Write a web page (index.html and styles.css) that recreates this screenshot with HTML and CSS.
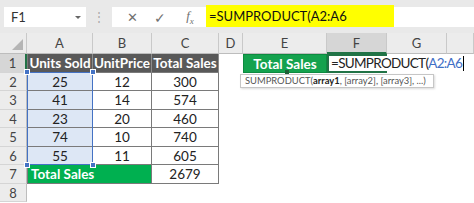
FILE: index.html
```html
<!DOCTYPE html>
<html lang="en">
<head>
  <meta charset="UTF-8">
  <title>SUMPRODUCT</title>
  <link rel="stylesheet" href="styles.css">
</head>
<body>

  <div class="topbar">
    <div class="namebox">
      <span>F1</span>
      <span class="caret"></span>
    </div>
    <div class="grip">&#8942;</div>
    <div class="fbar">
      <span class="fbtn">&#10005;</span>
      <span class="fbtn check">&#10003;</span>
      <span class="fbtn fx">f<sub>x</sub></span>
      <div class="formula">=SUMPRODUCT(A2:A6</div>
    </div>
  </div>

  <div class="sheet">
    <!-- column headers -->
    <div class="colhead corner"><span class="tri"></span></div>
    <div class="colhead">A</div>
    <div class="colhead">B</div>
    <div class="colhead">C</div>
    <div class="colhead">D</div>
    <div class="colhead">E</div>
    <div class="colhead active">F</div>
    <div class="colhead">G</div>
    <div class="colhead"></div>

    <!-- row 1 -->
    <div class="rowhead active">1</div>
    <div class="cell tbl first head">Units Sold</div>
    <div class="cell tbl head">UnitPrice</div>
    <div class="cell tbl head">Total Sales</div>
    <div class="cell"></div>
    <div class="cell green">Total Sales</div>
    <div class="cell current">=SUMPRODUCT(<span class="ref">A2:A6</span><span class="cursor"></span></div>
    <div class="cell"></div>
    <div class="cell"></div>

    <!-- rows 2-6 -->
    <div class="rowhead">2</div>
    <div class="cell tbl first sel">25</div>
    <div class="cell tbl">12</div>
    <div class="cell tbl">300</div>
    <div class="cell span5"></div>

    <div class="rowhead">3</div>
    <div class="cell tbl first sel">41</div>
    <div class="cell tbl">14</div>
    <div class="cell tbl">574</div>
    <div class="cell span5"></div>

    <div class="rowhead">4</div>
    <div class="cell tbl first sel">23</div>
    <div class="cell tbl">20</div>
    <div class="cell tbl">460</div>
    <div class="cell span5"></div>

    <div class="rowhead">5</div>
    <div class="cell tbl first sel">74</div>
    <div class="cell tbl">10</div>
    <div class="cell tbl">740</div>
    <div class="cell span5"></div>

    <div class="rowhead">6</div>
    <div class="cell tbl first sel">55</div>
    <div class="cell tbl">11</div>
    <div class="cell tbl">605</div>
    <div class="cell span5"></div>

    <!-- row 7 -->
    <div class="rowhead">7</div>
    <div class="cell tbl first total">Total Sales</div>
    <div class="cell tbl">2679</div>
    <div class="cell span5"></div>

    <!-- row 8 -->
    <div class="rowhead">8</div>
    <div class="cell span8"></div>

    <!-- overlays -->
    <div class="range">
      <span class="knob tl"></span>
      <span class="knob tr"></span>
      <span class="knob bl"></span>
      <span class="knob br"></span>
    </div>
    <div class="handle"></div>
    <div class="tip">SUMPRODUCT(<b>array1</b>, [array2], [array3], ...)</div>
  </div>

</body>
</html>
```

FILE: styles.css
```css
body {
  margin: 0;
  width: 474px;
  height: 203px;
  overflow: hidden;
  background-color: #fff;
  font-family: Lato, "Open Sans", sans-serif;
}

/* Formula bar */
.topbar {
  height: 33px;
  box-sizing: border-box;
  padding: 7px 0 0 4px;
  background-color: #e9e9e9;
  display: flex;
  align-items: flex-start;
}

.namebox {
  width: 82px;
  height: 20px;
  background-color: #fff;
  display: flex;
  align-items: center;
  justify-content: space-between;
  padding: 0 5px 0 7px;
  box-sizing: border-box;
  font-size: 13px;
  color: #333;
}

.caret {
  width: 0;
  height: 0;
  border-left: 3px solid transparent;
  border-right: 3px solid transparent;
  border-top: 3px solid #666;
}

.grip {
  width: 26px;
  height: 20px;
  text-align: center;
  line-height: 20px;
  font-size: 12px;
  color: #a9a9a9;
}

.fbar {
  flex: 1;
  height: 20px;
  background-color: #fff;
  display: flex;
  align-items: center;
  padding-left: 6px;
}

.fbtn {
  width: 28px;
  text-align: center;
  font-size: 13px;
  color: #707070;
}

.check {
  font-size: 14px;
}

.fx {
  font-family: "Liberation Serif", serif;
  font-style: italic;
  font-size: 13px;
  width: 32px;
}

.fx sub {
  font-size: 9px;
}

.formula {
  width: 188px;
  height: 22px;
  margin-top: -2px;
  background-color: #ffff00;
  font-size: 13px;
  line-height: 23px;
  padding-left: 3px;
  box-sizing: border-box;
  color: #111;
}

/* Grid */
.sheet {
  position: relative;
  display: grid;
  grid-template-columns: 27px 66px 59px 67px 24px 84px 60px 60px 1fr;
  grid-template-rows: 21px repeat(8, 18.5px);
  font-size: 13.5px;
  color: #222;
}

.colhead {
  background-color: #ececec;
  border-right: 1px solid #c9c9c9;
  border-bottom: 1px solid #bdbdbd;
  box-sizing: border-box;
  text-align: center;
  line-height: 20px;
  font-size: 13px;
  color: #444;
}

.colhead.active {
  background-color: #d6d6d6;
  border-bottom: 2px solid #217346;
}

.corner {
  position: relative;
}

.tri {
  position: absolute;
  right: 3px;
  bottom: 3px;
  width: 0;
  height: 0;
  border-left: 11px solid transparent;
  border-bottom: 11px solid #b5b5b5;
}

.rowhead {
  background-color: #ececec;
  border-right: 1px solid #bdbdbd;
  border-bottom: 1px solid #d5d5d5;
  box-sizing: border-box;
  text-align: center;
  line-height: 18px;
  font-size: 13px;
  color: #444;
}

.rowhead.active {
  background-color: #d6d6d6;
  border-right: 2px solid #217346;
}

.cell {
  box-sizing: border-box;
  text-align: center;
  line-height: 18px;
  white-space: nowrap;
}

.span5 {
  grid-column: span 5;
}

.span8 {
  grid-column: span 8;
}

.tbl {
  border-right: 1px solid #7a7a7a;
  border-bottom: 1px solid #7a7a7a;
}

.first {
  border-left: 1px solid #7a7a7a;
}

.head {
  background-color: #595959;
  color: #fff;
  font-weight: bold;
  border-right-color: #8c8c8c;
}

.sel {
  background-color: #dde7f5;
}

.total {
  grid-column: span 2;
  background-color: #00b050;
  color: #fff;
  font-weight: bold;
  text-align: left;
  padding-left: 3px;
}

.green {
  background-color: #14a24e;
  color: #fff;
  font-weight: bold;
  border: 1px solid #0d8a40;
}

.current {
  border: 2px solid #217346;
  border-right: none;
  text-align: left;
  padding-left: 2px;
  line-height: 15px;
  font-size: 13.5px;
  letter-spacing: -0.7px;
  position: relative;
  z-index: 1;
}

.ref {
  color: #3f6fc6;
}

.cursor {
  display: inline-block;
  width: 1px;
  height: 15px;
  margin-left: 1px;
  background-color: #000;
  vertical-align: -3px;
}

/* Overlays */
.range {
  position: absolute;
  left: 27px;
  top: 39px;
  width: 66px;
  height: 93px;
  border: 1.5px solid #4472c4;
  box-sizing: border-box;
}

.knob {
  position: absolute;
  width: 4px;
  height: 4px;
  background-color: #4472c4;
  border: 1px solid #fff;
}

.knob.tl { left: -4px; top: -4px; }
.knob.tr { right: -4px; top: -4px; }
.knob.bl { left: -4px; bottom: -4px; }
.knob.br { right: -4px; bottom: -4px; }

.handle {
  position: absolute;
  left: 285px;
  top: 37px;
  width: 4px;
  height: 4px;
  background-color: #1e5e35;
}

.tip {
  position: absolute;
  left: 240px;
  top: 41px;
  width: 194px;
  height: 14px;
  box-sizing: border-box;
  background-color: #fff;
  border: 1px solid #c6c6c6;
  box-shadow: 1px 1px 2px rgba(0, 0, 0, 0.15);
  font-size: 9.4px;
  line-height: 12px;
  padding-left: 4px;
  color: #555;
  white-space: nowrap;
  z-index: 2;
}

.tip b {
  color: #222;
}
```
